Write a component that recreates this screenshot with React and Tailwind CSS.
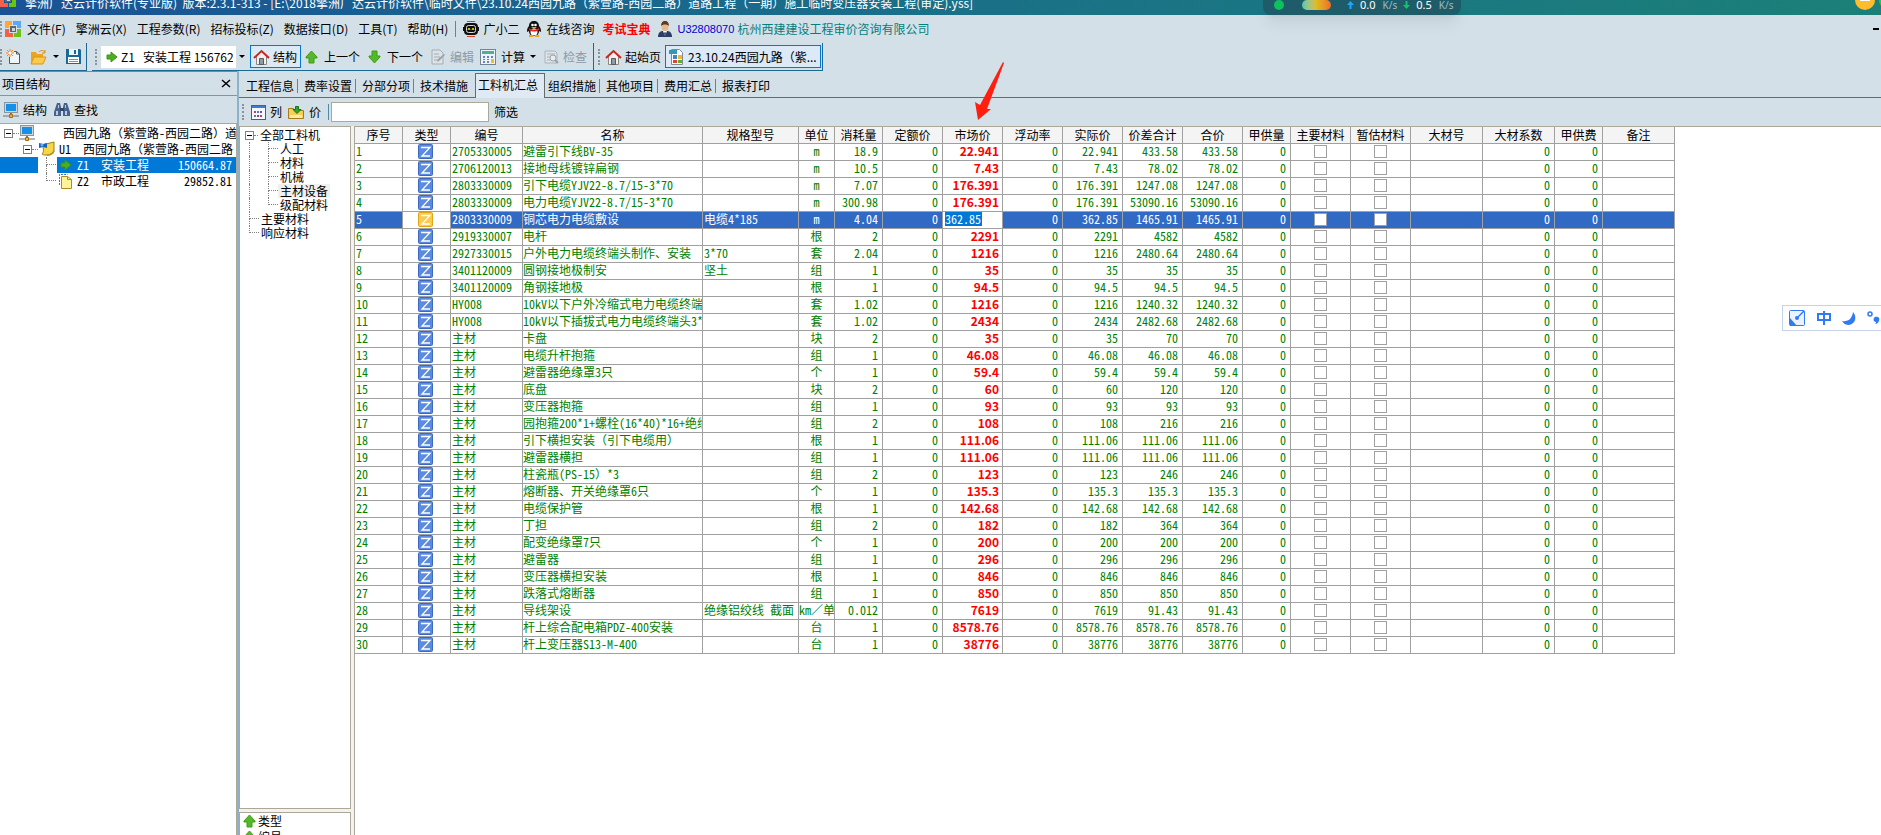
import { useState } from "react";

const rows = [
  ["2705330005", "避雷引下线BV-35", "", "m", "18.9", "22.941", "433.58"],
  ["2706120013", "接地母线镀锌扁钢", "", "m", "10.5", "7.43", "78.02"],
  ["2803330009", "引下电缆YJV22-8.7/15-3*70", "", "m", "7.07", "176.391", "1247.08"],
  ["2803330009", "电力电缆YJV22-8.7/15-3*70", "", "m", "300.98", "176.391", "53090.16"],
  ["2803330009", "铜芯电力电缆敷设", "电缆4*185", "m", "4.04", "362.85", "1465.91"],
  ["2919330007", "电杆", "", "根", "2", "2291", "4582"],
  ["2927330015", "户外电力电缆终端头制作、安装", "3*70", "套", "2.04", "1216", "2480.64"],
  ["3401120009", "圆钢接地极制安", "坚土", "组", "1", "35", "35"],
  ["3401120009", "角钢接地极", "", "根", "1", "94.5", "94.5"],
  ["HY008", "10kV以下户外冷缩式电力电缆终端头", "", "套", "1.02", "1216", "1240.32"],
  ["HY008", "10kV以下插拔式电力电缆终端头3*70", "", "套", "1.02", "2434", "2482.68"],
  ["主材", "卡盘", "", "块", "2", "35", "70"],
  ["主材", "电缆升杆抱箍", "", "组", "1", "46.08", "46.08"],
  ["主材", "避雷器绝缘罩3只", "", "个", "1", "59.4", "59.4"],
  ["主材", "底盘", "", "块", "2", "60", "120"],
  ["主材", "变压器抱箍", "", "组", "1", "93", "93"],
  ["主材", "园抱箍200*1+螺栓(16*40)*16+绝缘", "", "组", "2", "108", "216"],
  ["主材", "引下横担安装（引下电缆用）", "", "根", "1", "111.06", "111.06"],
  ["主材", "避雷器横担", "", "组", "1", "111.06", "111.06"],
  ["主材", "柱瓷瓶(PS-15）*3", "", "组", "2", "123", "246"],
  ["主材", "熔断器、开关绝缘罩6只", "", "个", "1", "135.3", "135.3"],
  ["主材", "电缆保护管", "", "根", "1", "142.68", "142.68"],
  ["主材", "丁担", "", "组", "2", "182", "364"],
  ["主材", "配变绝缘罩7只", "", "个", "1", "200", "200"],
  ["主材", "避雷器", "", "组", "1", "296", "296"],
  ["主材", "变压器横担安装", "", "根", "1", "846", "846"],
  ["主材", "跌落式熔断器", "", "组", "1", "850", "850"],
  ["主材", "导线架设", "绝缘铝绞线 截面", "km／单", "0.012", "7619", "91.43"],
  ["主材", "杆上综合配电箱PDZ-400安装", "", "台", "1", "8578.76", "8578.76"],
  ["主材", "杆上变压器S13-M-400", "", "台", "1", "38776", "38776"],
];

const columns = [
  ["序号", "w-[48px]"],
  ["类型", "w-[48px]"],
  ["编号", "w-[72px]"],
  ["名称", "w-[180px]"],
  ["规格型号", "w-[96px]"],
  ["单位", "w-[36px]"],
  ["消耗量", "w-[48px]"],
  ["定额价", "w-[60px]"],
  ["市场价", "w-[60px]"],
  ["浮动率", "w-[60px]"],
  ["实际价", "w-[60px]"],
  ["价差合计", "w-[60px]"],
  ["合价", "w-[60px]"],
  ["甲供量", "w-[48px]"],
  ["主要材料", "w-[60px]"],
  ["暂估材料", "w-[60px]"],
  ["大材号", "w-[72px]"],
  ["大材系数", "w-[72px]"],
  ["甲供费", "w-[48px]"],
  ["备注", "w-[72px]"],
];

const menus = ["文件(F)", "擎洲云(X)", "工程参数(R)", "招标投标(Z)", "数据接口(D)", "工具(T)", "帮助(H)"];
const tabs = ["工程信息", "费率设置", "分部分项", "技术措施", "工料机汇总", "组织措施", "其他项目", "费用汇总", "报表打印"];

/* ---------- icons ---------- */

function AppLogo() {
  return (
    <svg width="16" height="16" viewBox="0 0 16 16" className="shrink-0">
      <path d="M0 0h7v4H4v3H0z" fill="#ffa53a" />
      <path d="M8 0h8v7h-4V4H8z" fill="#5aa9f8" />
      <path d="M0 8h4v4h4v4H0z" fill="#f3604a" />
      <path d="M12 8h4v8H9v-4h3z" fill="#6ac414" />
      <path d="M5 5h6v6H5z" fill="#5d6770" />
      <path d="M7 7h3v3H7z" fill="#c9d4dc" />
    </svg>
  );
}

function RobotIcon() {
  return (
    <svg width="16" height="16" viewBox="0 0 16 16" className="shrink-0">
      <path d="M4 0h8v1H4z" fill="#d2402c" />
      <rect x="1" y="2" width="14" height="12" rx="4" fill="#111" />
      <rect x="3.500" y="4.500" width="9" height="7" rx="2" fill="#111" stroke="#d8d8d8" />
      <path d="M5 9l1-2 1 2M9 9l1-2 1 2" stroke="#ffe100" fill="none" />
      <path d="M0 6h1v4H0zM15 6h1v4h-1z" fill="#111" />
      <path d="M4 15h8v1H4z" fill="#d2402c" />
    </svg>
  );
}

function PenguinIcon() {
  return (
    <svg width="16" height="16" viewBox="0 0 16 16" className="shrink-0">
      <path d="M8 0c3 0 5 2 5 5 2 2 2 4 2 6l-2-1c0 3-2 5-5 5s-5-2-5-5l-2 1c0-2 0-4 2-6 0-3 2-5 5-5z" fill="#111" />
      <ellipse cx="8" cy="11" rx="3.500" ry="3.500" fill="#fff" />
      <circle cx="6.500" cy="4" r="1.300" fill="#fff" />
      <circle cx="9.500" cy="4" r="1.300" fill="#fff" />
      <path d="M5 6h6l-3 2z" fill="#f7a50c" />
      <path d="M3 7c3 2 7 2 10 0v2c-3 2-7 2-10 0z" fill="#e52420" />
      <path d="M3 14h4v2H3zM9 14h4v2H9z" fill="#f7a50c" />
    </svg>
  );
}

function PersonIcon() {
  return (
    <svg width="16" height="16" viewBox="0 0 16 16" className="shrink-0">
      <path d="M1 16c0-4 2-6 5-6h4c3 0 5 2 5 6z" fill="#2c3e66" />
      <path d="M6 10h4l-2 5z" fill="#fff" />
      <path d="M8 11l1 1-1 4-1-4z" fill="#2c3e66" />
      <ellipse cx="8" cy="5.500" rx="3.500" ry="4.500" fill="#e8b98b" />
      <path d="M4 5c0-7 8-7 8 0-2-2-6-2-8 0z" fill="#5b3a24" />
    </svg>
  );
}

function NewFileIcon() {
  return (
    <svg width="16" height="16" viewBox="0 0 16 16" className="shrink-0">
      <path d="M3.500 8v6.500h10V5l-3-2.500H8" fill="#f1f5f8" stroke="#4d5a66" />
      <path d="M10.500 2.500V5h3" fill="none" stroke="#4d5a66" />
      <path d="M4 0v8M0 4h8M1 1l6 6M7 1L1 7" stroke="#f08a24" />
      <circle cx="4" cy="4" r="1.500" fill="#fff" />
    </svg>
  );
}

function OpenFolderIcon() {
  return (
    <svg width="17" height="16" viewBox="0 0 17 16" className="shrink-0">
      <path d="M1 3h5l1 2h6v3H5l-4 6z" fill="#e9a420" />
      <path d="M4 8h12l-3 7H1z" fill="#fbc94b" stroke="#dc9715" />
      <path d="M9 3c2-2 4-2 6 0M15 1v3h-3" stroke="#dc8a15" fill="none" />
    </svg>
  );
}

function SaveIcon() {
  return (
    <svg width="15" height="15" viewBox="0 0 15 15" className="shrink-0">
      <path d="M0 0h14l1 1v14H0z" fill="#17699a" />
      <path d="M3 0h9v6H3z" fill="#eef5fa" />
      <path d="M8 1h2v4H8z" fill="#17699a" />
      <path d="M2 8h11v6H2z" fill="#fff" />
      <path d="M3 10.500h9M3 12.500h9" stroke="#52a0d2" />
    </svg>
  );
}

function ArrowRightIcon() {
  return (
    <svg width="12" height="12" viewBox="0 0 12 12" className="shrink-0">
      <path d="M1 4h4V1l6 5-6 5V8H1z" fill="#4cae20" stroke="#3b9415" />
    </svg>
  );
}

function ArrowVertical({ down }) {
  return (
    <svg width="13" height="14" viewBox="0 0 13 14" className={down ? "shrink-0 rotate-180" : "shrink-0"}>
      <path d="M6.500 1L12 7v1H9v5H4V8H1V7z" fill="#55b82a" stroke="#3f9c1b" />
    </svg>
  );
}

function HomeIcon() {
  return (
    <svg width="17" height="16" viewBox="0 0 17 16" className="shrink-0">
      <path d="M3.500 7l5-5 5 5v8.500h-10z" fill="#f3efec" stroke="#8c8783" />
      <path d="M1 9l7.500-7L16 9" fill="none" stroke="#c5281f" strokeWidth="2" />
      <path d="M6.500 9.500h4v6h-4z" fill="#8e9aa5" stroke="#5d5a58" />
    </svg>
  );
}

function EditIcon() {
  return (
    <svg width="15" height="16" viewBox="0 0 15 16" className="shrink-0">
      <path d="M1 1h8l3 3v11H1z" fill="#dde3e7" stroke="#a3adb5" />
      <path d="M3 5h5M3 8h6M3 11h4" stroke="#a3adb5" />
      <path d="M6 13l1-3 6-5 1 1-6 6z" fill="#97a3ac" />
    </svg>
  );
}

function CalcIcon() {
  return (
    <svg width="16" height="16" viewBox="0 0 16 16" className="shrink-0">
      <rect x="0.500" y="0.500" width="15" height="15" fill="#eef3f7" stroke="#6f8496" />
      <path d="M2 2h12v3H2z" fill="#4fae94" />
      <path d="M3 7h2v2H3zM7 7h2v2H7zM11 7h2v2h-2zM3 10h2v1H3zM7 10h2v1H7zM3 12h2v2H3zM7 12h2v2H7z" fill="#5f86c4" />
      <path d="M11 10h3v4h-3z" fill="#f4b93b" />
    </svg>
  );
}

function CheckDocIcon() {
  return (
    <svg width="15" height="16" viewBox="0 0 15 16" className="shrink-0">
      <path d="M1 2h10l2 2v10H1z" fill="#dde3e7" stroke="#aab4bb" />
      <path d="M3 5h8M3 8h4M3 11h3" stroke="#aab4bb" />
      <circle cx="9" cy="9" r="3" fill="#e8edf0" stroke="#98a3ab" />
      <path d="M11 11l3 3" stroke="#98a3ab" strokeWidth="2" />
    </svg>
  );
}

function ProjectFileIcon() {
  return (
    <svg width="15" height="16" viewBox="0 0 15 16" className="shrink-0">
      <path d="M2.500 0.500h8l3 3v12h-11z" fill="#fff" stroke="#7f8b95" />
      <path d="M0 1h8v4H0z" fill="#2d9bb8" />
      <path d="M4 6h4v4H4z" fill="#3a87d8" />
      <path d="M9 6h4v4H9z" fill="#f5b52c" />
      <path d="M4 11h4v3H4z" fill="#e2432f" />
      <path d="M9 11h4v3H9z" fill="#59b331" />
    </svg>
  );
}

function ComputerIcon() {
  return (
    <svg width="16" height="16" viewBox="0 0 16 16" className="shrink-0">
      <rect x="1.500" y="0.500" width="13" height="10" fill="#cfd6dc" stroke="#8c959c" />
      <path d="M3 2h10v7H3z" fill="#1590e8" />
      <path d="M7 11h2v2H7z" fill="#777" />
      <path d="M0 14h16" stroke="#6a7076" />
      <path d="M6.500 12.500h3v3h-3z" fill="#f4b13b" stroke="#a56c14" />
    </svg>
  );
}

function BinocularsIcon() {
  return (
    <svg width="16" height="14" viewBox="0 0 16 14" className="shrink-0">
      <path d="M3 0h3l1 4v9H0V9z" fill="#46628d" />
      <path d="M10 0h3l3 9v4H9V4z" fill="#46628d" />
      <path d="M6 5h4v3H6z" fill="#2f456a" />
      <path d="M2 8h2v4H2zM11 8h2v4h-2zM4 2h1v3H4zM11 2h1v3h-1z" fill="#b9cce6" />
    </svg>
  );
}

function NoteIcon() {
  return (
    <svg width="17" height="16" viewBox="0 0 17 16" className="shrink-0">
      <path d="M4 4l12-3v10c-2 2-5 3-8 3-2 0-3 0-4-1 2-2 2-5 0-9z" fill="#f6d548" stroke="#9d7e14" />
      <path d="M9 14c4-1 6-3 7-6v4c-2 2-4 3-7 3z" fill="#b89422" />
      <path d="M1 2l4 1 4-1v5L5 6 1 7z" fill="#1d5fb8" />
      <circle cx="4" cy="4" r="1.500" fill="#62b1f5" />
    </svg>
  );
}

function PagesIcon() {
  return (
    <svg width="13" height="15" viewBox="0 0 13 15" className="shrink-0">
      <path d="M0.500 11V0.500h8" fill="none" stroke="#3f79b5" strokeDasharray="2 1" />
      <path d="M2.500 2.500h6l4 3v9h-10z" fill="#fdf39a" stroke="#b08a26" />
      <path d="M8.500 2.500v3h4" fill="none" stroke="#b08a26" />
    </svg>
  );
}

function ColumnsIcon() {
  return (
    <svg width="15" height="15" viewBox="0 0 15 15" className="shrink-0">
      <rect x="0.500" y="0.500" width="14" height="14" fill="#f4f8ff" stroke="#2d62b5" />
      <path d="M1 1h13v2H1z" fill="#3d7bd6" />
      <path d="M3 6h2v2H3zM9 10h2v2H9z" fill="#d43a3a" />
      <path d="M6 6h2v2H6zM3 10h2v2H3z" fill="#5577c8" />
      <path d="M9 6h2v2H9zM6 10h2v2H6z" fill="#7b46b0" />
    </svg>
  );
}

function PriceFolderIcon() {
  return (
    <svg width="16" height="15" viewBox="0 0 16 15" className="shrink-0">
      <path d="M0.500 3.500h5l1 2h9v8h-15z" fill="#f7cf55" stroke="#a67c16" />
      <path d="M2 10h12v3H2z" fill="#fbe9a6" />
      <path d="M7.500 1.500h3v3h2.500L9 8.500 5 4.500h2.500z" fill="#2fa32b" stroke="#177517" />
    </svg>
  );
}

function TypeIcon({ active }) {
  return (
    <svg width="15" height="15" viewBox="0 0 15 15" className="ml-[15px] block">
      <rect x="0.500" y="0.500" width="14" height="14" rx="1" fill={active ? "#f9cb4e" : "#5b8be0"} stroke={active ? "#e0a41a" : "#3c69bd"} />
      <path d="M3 3.500h9L4 12h8" fill="none" stroke="#fff" strokeWidth="1.300" />
    </svg>
  );
}

function Caret() {
  return (
    <svg width="6" height="4" viewBox="0 0 6 4" className="shrink-0">
      <path d="M0 0h6L3 3z" fill="#000" />
    </svg>
  );
}

function Grip() {
  return <span className="h-4 w-0 shrink-0 border-l-2 border-dotted border-[#8b949b]" />;
}

/* ---------- tree helpers ---------- */

function Expander() {
  return (
    <span className="flex size-[9px] shrink-0 items-center justify-center border border-[#808080] bg-white">
      <span className="h-px w-[5px] bg-black" />
    </span>
  );
}

// dotted elbow between a parent line and its node
function Elbow({ last }) {
  return (
    <span className="flex h-full w-2.5 shrink-0 flex-col">
      <span className="h-1/2 border-b border-l border-dotted border-[#808080]" />
      {!last && <span className="h-1/2 border-l border-dotted border-[#808080]" />}
    </span>
  );
}

function MaterialTree() {
  const children = ["人工", "材料", "机械", "主材设备", "级配材料"];
  return (
    <ul className="font-[Noto_Sans_Mono_CJK_SC,Noto_Sans_CJK_SC,monospace] px-[5px] pt-px text-xs leading-[14px] whitespace-nowrap">
      <li className="flex h-3.5 items-center">
        <Expander />
        <span className="w-1 border-t border-dotted border-[#808080]" />
        <span className="pl-0.5">全部工料机</span>
      </li>
      {children.map((name, i) => (
        <li key={name} className="flex h-3.5 items-center pl-1">
          <span className="h-full w-[19px] shrink-0 border-l border-dotted border-[#808080]" />
          <Elbow last={i === children.length - 1} />
          <span className={name === "主材设备" ? "bg-[#f0f0f0] px-0.5" : "px-0.5"}>{name}</span>
        </li>
      ))}
      {["主要材料", "响应材料"].map((name, i) => (
        <li key={name} className="flex h-3.5 items-center pl-1">
          <Elbow last={i === 1} />
          <span className="pl-0.5">{name}</span>
        </li>
      ))}
    </ul>
  );
}

function ProjectTree() {
  return (
    <ul className="font-[Noto_Sans_Mono_CJK_SC,Noto_Sans_CJK_SC,monospace] pt-px text-xs leading-4 whitespace-pre">
      <li className="flex h-4 items-center pl-1">
        <Expander />
        <span className="w-1.5 shrink-0 border-t border-dotted border-[#808080]" />
        <ComputerIcon />
        <span className="pl-7">西园九路（紫萱路-西园二路）道</span>
      </li>
      <li className="flex h-4 items-center pl-[23px]">
        <Expander />
        <span className="w-1.5 shrink-0 border-t border-dotted border-[#808080]" />
        <NoteIcon />
        <span className="pl-1">U1  西园九路（紫萱路-西园二路</span>
      </li>
      <li className="flex h-4 items-center">
        <span className="h-full w-[38px] shrink-0 bg-[#0078d7]" />
        <span className="flex h-full w-[19px] shrink-0 pl-2">
          <Elbow />
        </span>
        <span className="flex h-full grow items-center bg-[#0078d7] pr-1 pl-[3px] text-white">
          <ArrowRightIcon />
          <span className="grow pl-[5px]">Z1  安装工程</span>
          <span>150664.87</span>
        </span>
      </li>
      <li className="flex h-4 items-center pl-[46px]">
        <Elbow last />
        <span className="flex h-full grow items-center pr-1 pl-[3px]">
          <PagesIcon />
          <span className="grow pl-[5px]">Z2  市政工程</span>
          <span>29852.81</span>
        </span>
      </li>
    </ul>
  );
}

/* ---------- material table ---------- */

function Tick({ label }) {
  return (
    <input
      type="checkbox"
      aria-label={label}
      className="mx-auto mt-px block size-[13px] appearance-none border border-[#a0a0a0] bg-white"
    />
  );
}

function MaterialRow({ row, index }) {
  const [code, name, spec, unit, usage, price, total] = row;
  const selected = index === 4;
  const [market, setMarket] = useState(price);
  const cell = "border-r border-b border-[#a0a0a0] p-0 align-top whitespace-nowrap";
  const num = cell + " pr-1 text-right";
  return (
    <tr className={selected ? "h-[17px] bg-[#316ac5] text-white" : "h-[17px] text-[#008000]"}>
      <td className={cell + " pl-px"}>{index + 1}</td>
      <td className={cell + " bg-white"}>
        <TypeIcon active={selected} />
      </td>
      <td className={cell + " pl-px"}>{code}</td>
      <td className={cell + " overflow-x-clip"}>{name}</td>
      <td className={cell + " pl-px"}>{spec}</td>
      <td className={cell + " overflow-x-clip text-center"}>{unit}</td>
      <td className={num}>{usage}</td>
      <td className={num}>0</td>
      {selected ? (
        <td className={cell + " bg-white pl-0.5"}>
          <input
            aria-label="市场价"
            value={market}
            onChange={(e) => setMarket(e.target.value)}
            className="block h-3.5 w-[37px] bg-[#0078d7] leading-[14px] text-white outline-none"
          />
        </td>
      ) : (
        <td className={cell + " pr-[3px] text-right font-[Noto_Sans_CJK_SC,sans-serif] font-bold text-[#ff0000]"}>{price}</td>
      )}
      <td className={num}>0</td>
      <td className={num}>{price}</td>
      <td className={num}>{total}</td>
      <td className={num}>{total}</td>
      <td className={num}>0</td>
      <td className={cell}>
        <Tick label="主要材料" />
      </td>
      <td className={cell}>
        <Tick label="暂估材料" />
      </td>
      <td className={cell} />
      <td className={num}>0</td>
      <td className={num}>0</td>
      <td className={cell} />
    </tr>
  );
}

function MaterialTable() {
  return (
    <table className="font-[Noto_Sans_Mono_CJK_SC,Noto_Sans_CJK_SC,monospace] w-[1320px] table-fixed border-separate border-spacing-0 text-xs leading-[14px]">
      <colgroup>
        {columns.map(([title, width]) => (
          <col key={title} className={width} />
        ))}
      </colgroup>
      <thead>
        <tr className="h-[17px] bg-[#f4f4f4]">
          {columns.map(([title]) => (
            <th key={title} className="border-b border-[#a0a0a0] p-0 font-normal whitespace-nowrap">
              <span className="block h-4 border-r border-[#a0a0a0] leading-4">{title}</span>
            </th>
          ))}
        </tr>
      </thead>
      <tbody>
        {rows.map((row, i) => (
          <MaterialRow key={i} row={row} index={i} />
        ))}
      </tbody>
    </table>
  );
}

/* ---------- window chrome ---------- */

function TitleBar() {
  return (
    <header className="relative h-[15px] shrink-0 bg-linear-to-r from-[#1a5296] via-[#1a7088] to-[#1c8078]">
      <div className="flex h-full items-end overflow-hidden text-xs leading-4 text-white">
        <span className="flex h-4 w-[25px] shrink-0 -translate-y-2">
          <AppLogo />
        </span>
        <h1 className="-translate-y-1 whitespace-pre">
          擎洲广达云计价软件(专业版)  版本:2.3.1-313 - [E:\2018擎洲广达云计价软件\临时文件\23.10.24西园九路（紫萱路-西园二路）道路工程（一期）施工临时变压器安装工程(审定).yss]
        </h1>
      </div>
      {/* network speed widget docked on the top edge */}
      <div className="absolute top-0 right-[420px] flex h-[15px] w-[198px] items-center rounded-b-lg bg-[#1f5c69] pb-1.5 pl-[11px] font-[Noto_Sans,sans-serif] text-[11px] leading-3 text-white shadow-lg">
        <span className="size-2.5 shrink-0 rounded-full bg-[#0cc25f]" />
        <span className="mx-[6px] ml-[18px] h-2.5 w-[29px] shrink-0 rounded-full bg-linear-to-r from-[#4cc7b4] via-[#e0bb1c] to-[#ec6a2c]" />
        <svg width="7" height="8" viewBox="0 0 7 8" className="ml-[10px] shrink-0">
          <path d="M3.500 0L7 4H4.500v4h-2V4H0z" fill="#1ea7ff" />
        </svg>
        <span className="pl-1.5">0.0</span>
        <span className="pl-[7px] text-[10px] text-[#9dbcc1]">K/s</span>
        <svg width="7" height="8" viewBox="0 0 7 8" className="ml-[6px] shrink-0">
          <path d="M3.500 8L7 4H4.500V0h-2v4H0z" fill="#12c466" />
        </svg>
        <span className="pl-1.5">0.5</span>
        <span className="pl-[7px] text-[10px] text-[#9dbcc1]">K/s</span>
      </div>
      <div className="absolute top-0 right-0 h-2.5 w-[26px] overflow-hidden">
        <svg width="26" height="10" viewBox="0 0 26 10">
          <circle cx="10" cy="0" r="10" fill="#ffbd2e" />
          <path d="M5 0h10v1H5z" fill="#fff" />
          <circle cx="34" cy="0" r="10" fill="#28c840" />
        </svg>
      </div>
    </header>
  );
}

function MenuBar() {
  return (
    <nav className="flex h-7 shrink-0 items-center whitespace-nowrap">
      <Grip />
      <span className="w-[25px] shrink-0 pl-[3px]">
        <AppLogo />
      </span>
      <div className="flex gap-2.5">
        {menus.map((m) => (
          <button key={m}>{m}</button>
        ))}
      </div>
      <span className="mx-[7px] h-4 w-px bg-[#4f8aa8]" />
      <button className="flex items-center gap-1">
        <RobotIcon />
        广小二
      </button>
      <button className="flex items-center gap-1 pl-[7px]">
        <PenguinIcon />
        在线咨询
      </button>
      <button className="pl-2 font-bold text-[#ff0000]">考试宝典</button>
      <span className="flex items-center gap-1 pl-[7px]">
        <PersonIcon />
        <span className="w-[56px] font-[Liberation_Sans,sans-serif] text-[11px] text-[#0000d0]">U32808070</span>
        <a href="#company" className="text-[#008080]">杭州西建建设工程审价咨询有限公司</a>
      </span>
      <span className="mr-0.5 ml-auto h-0.5 w-1.5 bg-black" />
    </nav>
  );
}

function Toolbar() {
  return (
    <div className="flex h-7 shrink-0 items-stretch whitespace-nowrap">
      <div className="flex w-[87px] shrink-0 items-center border-r border-b border-[#1a6a98]">
        <Grip />
        <button aria-label="新建" className="pl-1">
          <NewFileIcon />
        </button>
        <button aria-label="打开" className="flex items-center gap-1.5 pl-2">
          <OpenFolderIcon />
          <Caret />
        </button>
        <button aria-label="保存" className="pl-[7px]">
          <SaveIcon />
        </button>
      </div>
      <div className="ml-[5px] flex w-[502px] shrink-0 items-center border-r border-b border-[#1a6a98] pl-[3px]">
        <Grip />
        <label className="ml-1 flex h-[22px] w-[135px] items-center bg-white pl-[5px]">
          <ArrowRightIcon />
          <select aria-label="当前工程" className="ml-[3px] w-[112px] appearance-none overflow-hidden text-clip outline-none">
            <option>{"Z1\u00a0\u00a0\u00a0安装工程 156762"}</option>
          </select>
        </label>
        <span className="flex h-[22px] w-3 items-center justify-center">
          <Caret />
        </span>
        <button className="ml-0.5 flex h-[23px] w-[51px] items-center gap-[3px] border border-[#0078d7] bg-[#dce9f6] pl-0.5">
          <HomeIcon />
          结构
        </button>
        <button className="flex items-center gap-1.5 pl-1">
          <ArrowVertical />
          上一个
        </button>
        <button className="flex items-center gap-1.5 pl-2">
          <ArrowVertical down />
          下一个
        </button>
        <button disabled className="flex items-center gap-1 pl-2 text-[#8d9aa3]">
          <EditIcon />
          编辑
        </button>
        <button className="flex items-center gap-[5px] pl-1.5">
          <CalcIcon />
          计算
          <Caret />
        </button>
        <button disabled className="flex items-center gap-1 pl-2 text-[#8d9aa3]">
          <CheckDocIcon />
          检查
        </button>
      </div>
      <div className="flex w-[229px] shrink-0 items-center border-r border-b border-[#1a6a98] pl-1">
        <Grip />
        <button className="flex items-center gap-[3px] pl-[5px]">
          <HomeIcon />
          起始页
        </button>
        <button className="ml-1 flex h-[23px] w-[156px] items-center gap-1 border border-[#0078d7] bg-[#dce9f6] pl-[3px]">
          <ProjectFileIcon />
          <span>23.10.24西园九路（紫...</span>
        </button>
      </div>
    </div>
  );
}

function ProjectPanel() {
  return (
    <aside className="flex w-[237px] shrink-0 flex-col border-t border-[#7c8790]">
      <div className="flex h-6 shrink-0 items-center justify-between border-b border-[#8a939a] pr-1.5 pl-0.5">
        <h2>项目结构</h2>
        <button aria-label="关闭">
          <svg width="10" height="9" viewBox="0 0 10 9">
            <path d="M1 1l8 7M9 1L1 8" stroke="#000" strokeWidth="1.500" />
          </svg>
        </button>
      </div>
      <div className="flex h-[27px] shrink-0 items-center">
        <button className="flex items-center gap-1 pl-[3px]">
          <ComputerIcon />
          结构
        </button>
        <button className="flex items-center gap-1 pl-[7px]">
          <BinocularsIcon />
          查找
        </button>
      </div>
      <div className="grow overflow-hidden border-t border-r border-[#aca899] bg-white">
        <ProjectTree />
      </div>
    </aside>
  );
}

function Tabs() {
  return (
    <div role="tablist" className="flex h-[26px] shrink-0 items-end border-b border-[#646c72] pt-px pl-1">
      {tabs.map((tab, i) =>
        i === 4 ? (
          <button
            key={tab}
            role="tab"
            aria-selected="true"
            className="-mb-px h-[25px] w-[70px] border border-b-0 border-[#646c72] bg-[#dfeaf5] pr-1 pb-[3px] text-center"
          >
            {tab}
          </button>
        ) : (
          <button key={tab} role="tab" className="flex h-[22px] w-[58px] items-center justify-between pl-[3px]">
            {tab}
            {i !== 3 && i !== 8 && <span className="mr-[3px] h-3.5 w-px bg-[#4f8aa8]" />}
          </button>
        )
      )}
    </div>
  );
}

function FilterBar() {
  return (
    <div className="flex h-7 shrink-0 items-center pl-[3px]">
      <Grip />
      <button className="flex items-center gap-1 pl-[7px]">
        <ColumnsIcon />
        列
      </button>
      <button className="flex items-center gap-[5px] pl-[6px]">
        <PriceFolderIcon />
        价
      </button>
      <span className="mr-0.5 ml-[7px] h-4 w-px bg-[#4f8aa8]" />
      <input aria-label="筛选" className="h-5 w-[158px] border border-[#aca899] bg-white px-1 outline-none" />
      <button className="pl-[5px]">筛选</button>
    </div>
  );
}

function ImeBar() {
  return (
    <div className="absolute top-[305px] right-0 flex h-[26px] w-[99px] items-center overflow-hidden border border-r-0 border-[#c5d3ea] bg-white">
      <svg width="98" height="24" viewBox="0 0 98 24" className="shrink-0">
        <rect x="6.500" y="4.500" width="15" height="15" rx="1" fill="#eaf1ff" stroke="#2f7af5" />
        <path d="M7 12l7 8H7z" fill="#2f7af5" />
        <path d="M14 12l7-7" stroke="#2f7af5" strokeWidth="1.500" />
        <circle cx="14" cy="12" r="2" fill="#2f7af5" />
        <path d="M35 8h12v6H35zM41 5v14" fill="none" stroke="#2f7af5" strokeWidth="2" />
        <path d="M70 6c4 4 3 12-4 13-3 0-5-1-7-4 6 1 10-2 11-9z" fill="#2f7af5" />
        <circle cx="87" cy="8" r="2" fill="none" stroke="#2f7af5" strokeWidth="1.500" />
        <path d="M92 11c4-1 5 2 4 4-1 2-2 3-4 3 1-1 1-1 1-2-3 0-3-4-1-5z" fill="#2f7af5" />
      </svg>
    </div>
  );
}

export default function App() {
  return (
    <div className="relative flex h-screen flex-col overflow-hidden bg-[#d4e0e8] font-[Noto_Sans_CJK_SC,sans-serif] text-xs leading-4 text-black">
      <TitleBar />
      <MenuBar />
      <Toolbar />
      <div className="flex min-h-0 grow">
        <ProjectPanel />
        <main className="flex min-w-0 grow flex-col border-l-2 border-[#8eb0c8] pt-px">
          <Tabs />
          <FilterBar />
          <div className="flex min-h-0 grow bg-[#f4f2f0]">
            <div className="flex w-[112px] shrink-0 flex-col gap-[3px]">
              <div className="grow border border-[#aca899] bg-white">
                <MaterialTree />
              </div>
              <div className="h-[23px] shrink-0 overflow-hidden border border-b-0 border-[#aca899] bg-white pl-[3px]">
                {["类型", "编号"].map((name) => (
                  <button key={name} className="flex h-4 items-center gap-0.5">
                    <ArrowVertical />
                    {name}
                  </button>
                ))}
              </div>
            </div>
            <div className="ml-[3px] min-w-0 grow overflow-hidden border-t border-l border-[#aca899] bg-white">
              <MaterialTable />
            </div>
          </div>
        </main>
      </div>
      {/* red pointer over the 市场价 column */}
      <svg width="32" height="60" viewBox="0 0 32 60" className="pointer-events-none absolute top-[61px] left-[974px]">
        <path d="M29 1l1 1-17 46h4L4 59 1 41l5 3z" fill="#ff1e10" />
      </svg>
      <ImeBar />
    </div>
  );
}
